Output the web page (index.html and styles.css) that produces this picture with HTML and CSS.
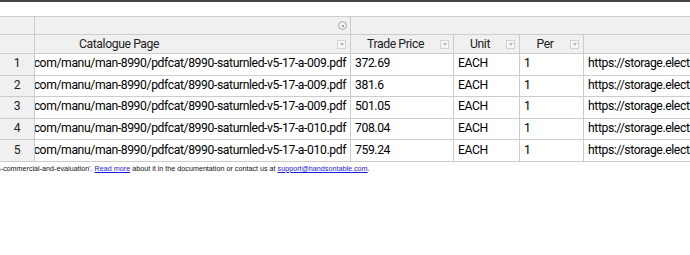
FILE: index.html
```html
<!DOCTYPE html>
<html>
<head>
<meta charset="utf-8">
<link rel="stylesheet" href="styles.css">
</head>
<body>
<div class="page">
  <div class="grid">
    <div class="cell corner"></div>
    <div class="cell group"><span class="collapse-icon"></span></div>
    <div class="cell group group-rest"></div>

    <div class="cell corner"></div>
    <div class="cell head"><span class="label label-first">Catalogue Page</span><span class="filter"></span></div>
    <div class="cell head"><span class="label">Trade Price</span><span class="filter"></span></div>
    <div class="cell head"><span class="label">Unit</span><span class="filter"></span></div>
    <div class="cell head"><span class="label">Per</span><span class="filter"></span></div>
    <div class="cell head"></div>

    <div class="cell rowhead">1</div>
    <div class="cell data right"><span>https://storage.electrika.com/manu/man-8990/pdfcat/8990-saturnled-v5-17-a-009.pdf</span></div>
    <div class="cell data">372.69</div>
    <div class="cell data">EACH</div>
    <div class="cell data">1</div>
    <div class="cell data">https://storage.electrika.com/manu/man-8990/images/8990-saturnled.jpg</div>

    <div class="cell rowhead">2</div>
    <div class="cell data right"><span>https://storage.electrika.com/manu/man-8990/pdfcat/8990-saturnled-v5-17-a-009.pdf</span></div>
    <div class="cell data">381.6</div>
    <div class="cell data">EACH</div>
    <div class="cell data">1</div>
    <div class="cell data">https://storage.electrika.com/manu/man-8990/images/8990-saturnled.jpg</div>

    <div class="cell rowhead">3</div>
    <div class="cell data right"><span>https://storage.electrika.com/manu/man-8990/pdfcat/8990-saturnled-v5-17-a-009.pdf</span></div>
    <div class="cell data">501.05</div>
    <div class="cell data">EACH</div>
    <div class="cell data">1</div>
    <div class="cell data">https://storage.electrika.com/manu/man-8990/images/8990-saturnled.jpg</div>

    <div class="cell rowhead">4</div>
    <div class="cell data right"><span>https://storage.electrika.com/manu/man-8990/pdfcat/8990-saturnled-v5-17-a-010.pdf</span></div>
    <div class="cell data">708.04</div>
    <div class="cell data">EACH</div>
    <div class="cell data">1</div>
    <div class="cell data">https://storage.electrika.com/manu/man-8990/images/8990-saturnled.jpg</div>

    <div class="cell rowhead">5</div>
    <div class="cell data right"><span>https://storage.electrika.com/manu/man-8990/pdfcat/8990-saturnled-v5-17-a-010.pdf</span></div>
    <div class="cell data">759.24</div>
    <div class="cell data">EACH</div>
    <div class="cell data">1</div>
    <div class="cell data">https://storage.electrika.com/manu/man-8990/images/8990-saturnled.jpg</div>
  </div>
  <p class="notice">key: 'non-commercial-and-evaluation'. <a href="#">Read more</a> about it in the documentation or contact us at <a href="#">support@handsontable.com</a>.</p>
</div>
</body>
</html>
```

FILE: styles.css
```css
html, body {
  margin: 0;
  padding: 0;
  background: #ffffff;
  overflow: hidden;
}

.page {
  width: 690px;
  height: 255px;
  border-top: 2px solid #454545;
  box-sizing: border-box;
  padding-top: 14px;
  overflow: hidden;
  font-family: Roboto, "Noto Sans", sans-serif;
}

.grid {
  display: grid;
  grid-template-columns: 35px 316px 103px 66px 64px 160px;
  grid-template-rows: 18px 19px repeat(5, 21.6px);
  width: 744px;
  border-top: 1px solid #cccccc;
}

.cell {
  box-sizing: border-box;
  border-right: 1px solid #cccccc;
  border-bottom: 1px solid #cccccc;
  overflow: hidden;
  white-space: nowrap;
  display: flex;
  align-items: center;
  font-size: 12.2px;
  letter-spacing: -0.4px;
  color: #111111;
}

.corner {
  background: #f0f0f0;
}

.group {
  background: #f0f0f0;
  justify-content: flex-end;
  padding-right: 3px;
}

.group-rest {
  grid-column: span 4;
}

.collapse-icon {
  width: 7px;
  height: 7px;
  border: 1px solid #a8a8a8;
  border-radius: 50%;
  display: flex;
  align-items: center;
  justify-content: center;
}

.collapse-icon::after {
  content: "";
  width: 2px;
  height: 2px;
  border-radius: 50%;
  background: #8a8a8a;
}

.head {
  background: #f0f0f0;
  color: #222222;
  padding-right: 4px;
}

.label {
  flex: 1;
  text-align: center;
}

.label-first {
  flex: none;
  margin-left: 44px;
  margin-right: auto;
}

.filter {
  width: 9px;
  height: 9px;
  box-sizing: border-box;
  border: 1px solid #d2d2d2;
  background: #f7f7f7;
  display: flex;
  align-items: center;
  justify-content: center;
  flex: none;
}

.filter::after {
  content: "";
  border-left: 2px solid transparent;
  border-right: 2px solid transparent;
  border-top: 3px solid #b5b5b5;
}

.rowhead {
  background: #f0f0f0;
  justify-content: center;
  color: #222222;
  padding-bottom: 2px;
}

.data {
  padding: 0 4px 2px 4px;
  color: #000000;
}

.right {
  justify-content: flex-end;
}

.right span {
  flex: none;
}

.notice {
  margin: 0;
  padding-top: 2px;
  font-family: "Liberation Sans", Arial, sans-serif;
  font-size: 7.2px;
  line-height: 10px;
  white-space: nowrap;
  text-indent: -28px;
  color: #111111;
}

.notice a {
  color: #1a1adc;
}
```
